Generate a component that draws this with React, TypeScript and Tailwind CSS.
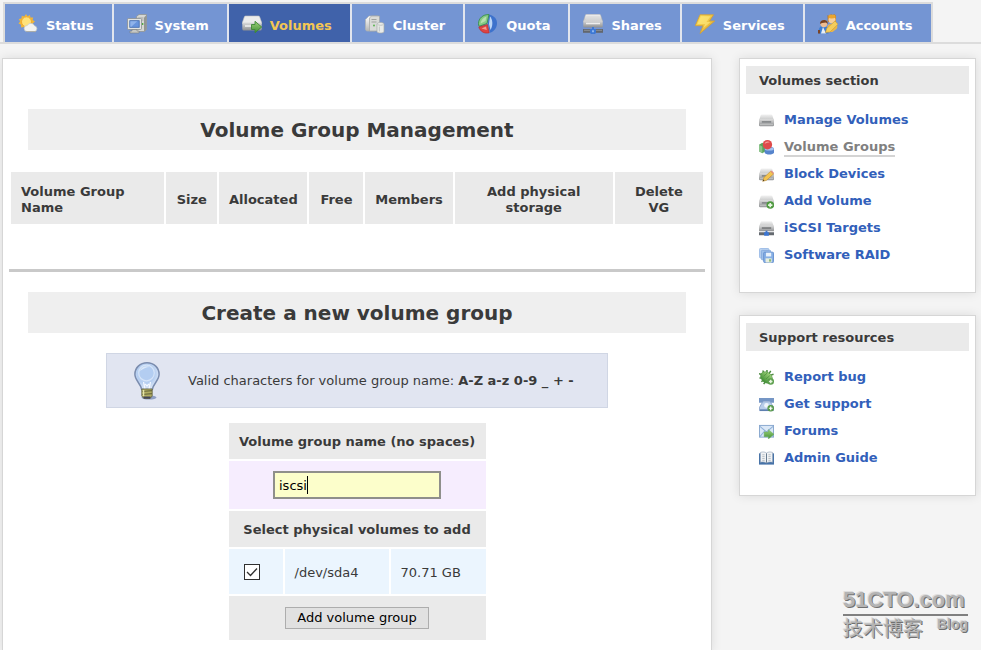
import React from "react";

type IconProps = { className?: string };

function Defs() {
  return (
    <svg width="0" height="0" className="absolute" aria-hidden="true">
      <defs>
        <linearGradient id="silver" x1="0" y1="0" x2="0" y2="1">
          <stop offset="0" stopColor="#ffffff" />
          <stop offset="1" stopColor="#b4b6b4" />
        </linearGradient>
        <linearGradient id="steel" x1="0" y1="0" x2="0" y2="1">
          <stop offset="0" stopColor="#dcdcdc" />
          <stop offset="1" stopColor="#8e9092" />
        </linearGradient>
        <linearGradient id="lid" x1="0" y1="0" x2="0" y2="1">
          <stop offset="0" stopColor="#f2f2f2" />
          <stop offset="1" stopColor="#c2c3c3" />
        </linearGradient>
        <linearGradient id="leaf" x1="0" y1="0" x2="0" y2="1">
          <stop offset="0" stopColor="#9fd27a" />
          <stop offset="1" stopColor="#3f8f35" />
        </linearGradient>
        <linearGradient id="sky" x1="0" y1="0" x2="0" y2="1">
          <stop offset="0" stopColor="#cfe2f7" />
          <stop offset="1" stopColor="#5f8fce" />
        </linearGradient>
        <linearGradient id="gold" x1="0" y1="0" x2="1" y2="1">
          <stop offset="0" stopColor="#ffe45e" />
          <stop offset="1" stopColor="#dda62a" />
        </linearGradient>
        <radialGradient id="glass" cx="0.45" cy="0.4" r="0.6">
          <stop offset="0" stopColor="#d9e8fa" />
          <stop offset="0.6" stopColor="#b4cdf0" />
          <stop offset="1" stopColor="#dfe9f7" />
        </radialGradient>
      </defs>
    </svg>
  );
}

function WeatherIcon({ className }: IconProps) {
  return (
    <svg viewBox="0 0 20 20" className={className} aria-hidden="true">
      <path d="M8 0l1.500 2.200L12 1l.4 2.600 2.800-.2-.6 2.600 2.400 1.500-2 1.800.6 2.700-2.700.2-1 2.600-2.500-1.100L7 15.500l-1.300-2.400-2.700.4.100-2.700L.5 9.500l1.600-2.100L.8 5l2.600-.5L3.800 1.800l2.500.8z" fill="#f0b63a" />
      <circle cx="8.500" cy="7.800" r="5" fill="#ffe27a" stroke="#f2a92c" />
      <path d="M9 17.500a3 3 0 0 1 .3-6 4 4 0 0 1 7.200.2 3 3 0 0 1 .3 5.800z" fill="#f3f3f0" stroke="#c4c8c6" strokeWidth=".7" />
      <path d="M8 17.600h10" stroke="#a9aaa6" />
    </svg>
  );
}

function SystemIcon({ className }: IconProps) {
  return (
    <svg viewBox="0 0 20 20" className={className} aria-hidden="true">
      <path d="M9.500 2.500L12 .5h7.500v15l-2 2h-8z" fill="#d6d8d4" stroke="#8c8f8c" strokeWidth=".7" />
      <path d="M17 3.500L19.500 1v14.500l-2.500 2z" fill="#929693" />
      <path d="M10.500 4h6M10.500 6h6" stroke="#999" strokeWidth=".8" />
      <circle cx="15.500" cy="10" r="1" fill="#44a832" />
      <rect x=".5" y="4.500" width="14" height="11" rx="1" fill="#e2e4e1" stroke="#8a8f90" strokeWidth=".8" />
      <rect x="2.800" y="6.700" width="9.400" height="6.600" fill="#6794dc" stroke="#3e68ad" strokeWidth=".8" />
      <path d="M3.300 7.200h7L4.300 12.700h-1z" fill="#8fb3ea" />
      <path d="M5 15.500h5v1.500h2v2H3v-2h2z" fill="#c6c8c5" stroke="#7d807d" strokeWidth=".6" />
    </svg>
  );
}

function DriveGoIcon({ className }: IconProps) {
  return (
    <svg viewBox="0 0 20 20" className={className} aria-hidden="true">
      <path d="M3.500 2h13c.6 0 1 .3 1.200 1L20 9.500H0L2.300 3c.2-.7.600-1 1.200-1z" fill="#ececec" stroke="#bfc1c0" strokeWidth=".6" />
      <rect x=".3" y="8.500" width="19.400" height="8" rx="1.500" fill="url(#steel)" />
      <path d="M3 12h8" stroke="#f2f2f2" strokeWidth="1.500" />
      <path d="M9.500 10.500h3.500V7.300l6.700 5.700-6.700 5.700v-3.200H9.500z" fill="url(#leaf)" stroke="#3d8836" strokeWidth=".9" />
    </svg>
  );
}

function ClusterIcon({ className }: IconProps) {
  return (
    <svg viewBox="0 0 20 20" className={className} aria-hidden="true">
      <path d="M.5 5.500L4 2h9v12.500L9.500 17h-8L.5 15.500z" fill="url(#silver)" stroke="#b0b3b2" strokeWidth=".7" />
      <path d="M4.500 4l2-2h8v13l-2 2h-8z" fill="#d9dbd8" stroke="#a2a5a3" strokeWidth=".7" />
      <path d="M6.500 5.500h5M6.500 8h5" stroke="#989b99" strokeWidth=".9" />
      <circle cx="9" cy="11.500" r=".9" fill="#4cb040" />
      <path d="M12 10c0-2 7-2 7 0v7.500c0 2-7 2-7 0z" fill="#e9ebe9" stroke="#a5a9a7" strokeWidth=".7" />
      <path d="M12.500 10.300c1 1.300 5 1.300 6 0M14.300 12.500v5" stroke="#bfc2c0" fill="none" />
    </svg>
  );
}

function QuotaIcon({ className }: IconProps) {
  return (
    <svg viewBox="0 0 20 20" className={className} aria-hidden="true">
      <path d="M11 .5c5 1.200 8.500 4.500 8 9.500-.4 4.500-3 7.300-7 8.800L10 9z" fill="#3d72cc" />
      <path d="M12 2.500c2.500 2.500 3.500 8 .5 13.500L11 10z" fill="#bcd6f6" />
      <path d="M11 .6C5 .2.500 4.500.500 9.500c0 1 .2 2 .6 2.800L9 9.500z" fill="#86c987" stroke="#2f8c3f" strokeWidth=".8" />
      <path d="M2.500 9.500c.5-3.500 3-6 6-7L7.500 7z" fill="#b6e0ae" />
      <path d="M.8 13L9.500 10.500l1.700 8.300C6.500 20 2 17.500.8 13z" fill="#dd4442" stroke="#bb2527" strokeWidth=".6" />
      <path d="M3.500 14.500l4.500-2 .8 3.500z" fill="#f59a92" />
    </svg>
  );
}

function DriveNetworkIcon({ className }: IconProps) {
  return (
    <svg viewBox="0 0 20 20" className={className} aria-hidden="true">
      <path d="M3.500 .3h13c.6 0 1 .3 1.200 1l2 6.200H.3l2-6.200c.2-.7.600-1 1.200-1z" fill="url(#lid)" stroke="#a9abab" strokeWidth=".5" />
      <path d="M3.500 3h13M3 5h14" stroke="#d9dada" />
      <rect x=".3" y="6.500" width="19.400" height="7" rx="1.300" fill="url(#steel)" />
      <path d="M3 9.500h14" stroke="#eeeeee" strokeWidth="1.500" />
      <path d="M0 15h20v3.800H0z" fill="#62676e" />
      <path d="M1 16.300h18" stroke="#8d9299" />
      <path d="M9 13h2v2h2v3.800L12 20H8l-1-1.200V15h2z" fill="#3d78d4" />
      <path d="M9 16.200h2v2H9z" fill="#8bb5f0" />
    </svg>
  );
}

function LightningIcon({ className }: IconProps) {
  return (
    <svg viewBox="0 0 20 20" className={className} aria-hidden="true">
      <path d="M5 .8h13.500L14.500 7H19.700L5 19.500l3-7.800H.3z" fill="url(#gold)" stroke="#d7a02e" strokeWidth=".8" />
      <path d="M6 2.300h9.500L11.500 8h4L8.500 14l1.500-4H2.500z" fill="#ffeb83" opacity=".6" />
    </svg>
  );
}

function AccountsIcon({ className }: IconProps) {
  return (
    <svg viewBox="0 0 20 20" className={className} aria-hidden="true">
      <path d="M9.500 18c-1-5 0-8 3.500-8h3.500c3 0 3.500 3 2 5l-4 3z" fill="#eab74c" />
      <path d="M9.500 1l1.500 1 2-1.700L14.500 1l2-.8L18 2v6H9.800z" fill="#b97320" />
      <circle cx="14" cy="5.800" r="3.600" fill="#f6cf9b" />
      <path d="M10 3.500c2 1.300 5 1.300 8 0L17 .8h-6z" fill="#e9a52e" />
      <path d="M.5 19.500c0-6 1.500-7.500 5-7.500s5 2 5 7.500z" fill="#3f7fd0" />
      <path d="M5 13l3 6.500H3z" fill="#e9eef5" />
      <circle cx="5.800" cy="9.800" r="3.400" fill="#edbd91" />
      <path d="M2 10C1.500 4.500 10.500 4.500 9.700 10L8 8.500 4 9z" fill="#79421f" />
      <path d="M7.500 18.500l1.200-4 8.300-7.500 3 3.300-8 7.700z" fill="#f4cd5c" stroke="#cf982e" strokeWidth=".6" />
      <path d="M0 16h2v3.500H0z" fill="#7b4426" />
    </svg>
  );
}

function SmallDrive({ children, className }: { children?: React.ReactNode; className?: string }) {
  return (
    <svg viewBox="0 0 16 16" className={className} aria-hidden="true">
      <path d="M3 1.500h10c.6 0 1 .3 1.200 1L16 8H0l1.800-5.500c.2-.7.600-1 1.200-1z" fill="url(#lid)" />
      <rect x="0" y="6.500" width="16" height="7.500" rx="1.300" fill="url(#steel)" />
      <path d="M3 9.500h10" stroke="#7b7e80" strokeWidth="1.500" />
      <path d="M1 12.500h14" stroke="#c5c6c6" />
      {children}
    </svg>
  );
}

function ManageIcon({ className }: IconProps) {
  return <SmallDrive className={className} />;
}

function BlockIcon({ className }: IconProps) {
  return (
    <SmallDrive className={className}>
      <path d="M4 15.300l1.200-4 7.300-6.800 3 2.900-7.500 6.800z" fill="#f3c452" stroke="#bd8a2c" strokeWidth=".6" />
      <path d="M12.300 4.700l1.200-1L16 6.300l-.8 1.200z" fill="#e38d82" />
      <path d="M4 15.300l.6-1.900 1.300 1.300z" fill="#4a3a20" />
    </SmallDrive>
  );
}

function AddDriveIcon({ className }: IconProps) {
  return (
    <SmallDrive className={className}>
      <circle cx="12" cy="11.800" r="4" fill="#4e9a3f" />
      <path d="M12 9.500v4.600M9.700 11.800h4.600" stroke="#e9f6e4" strokeWidth="1.800" />
    </SmallDrive>
  );
}

function TargetIcon({ className }: IconProps) {
  return (
    <svg viewBox="0 0 16 16" className={className} aria-hidden="true">
      <path d="M3 .3h10c.6 0 1 .3 1.200 1L16 6H0l1.800-4.700c.2-.7.600-1 1.200-1z" fill="url(#lid)" />
      <rect x="0" y="4.800" width="16" height="6.200" rx="1" fill="url(#steel)" />
      <path d="M3 7.500h10" stroke="#6d7072" strokeWidth="1.500" />
      <path d="M0 12h16v3.200H0z" fill="#656a70" />
      <path d="M7 10.500h2V12h1.500v3.700h-5V12H7z" fill="#3c76d3" />
    </svg>
  );
}

function GroupsIcon({ className }: IconProps) {
  return (
    <svg viewBox="0 0 16 16" className={className} aria-hidden="true">
      <path d="M0 5l3.500-2L7 5v7l-3.500 2L0 12z" fill="#5aa55c" />
      <path d="M0 5l3.500 2v7L0 12z" fill="#8bc48a" />
      <path d="M6 9c1-2.500 9-2.500 10 0v4.500c-1 2.500-9 2.500-10 0z" fill="#5684cc" />
      <ellipse cx="11" cy="9.500" rx="4.800" ry="1.800" fill="#a6c4ee" />
      <circle cx="9" cy="5" r="5" fill="#df4a4b" />
      <path d="M6 4c.6-2.500 4-3 5.500-1.500C10 2.600 8 3.500 6 4z" fill="#f4a09b" />
    </svg>
  );
}

function RaidIcon({ className }: IconProps) {
  return (
    <svg viewBox="0 0 16 16" className={className} aria-hidden="true">
      <rect x=".5" y=".5" width="10" height="10" rx="1" fill="#bcd3f0" stroke="#9dbce6" />
      <rect x="2.500" y="2.500" width="10" height="10" rx="1" fill="#9fc0ea" stroke="#86abdd" />
      <rect x="5" y="4.500" width="10.500" height="11" rx="1" fill="#86afe5" stroke="#6590cf" />
      <rect x="7.500" y="5" width="5.500" height="4" fill="#eaf2fb" />
      <rect x="7" y="11" width="6.500" height="4.500" fill="#e8eedf" />
      <rect x="11" y="12" width="1.500" height="2.500" fill="#6da84f" />
    </svg>
  );
}

function BugIcon({ className }: IconProps) {
  return (
    <svg viewBox="0 0 16 16" className={className} aria-hidden="true">
      <path d="M0 4l4 1M.5 8.500h4M4 .5l1.500 3.500M8.500 0v3M2.500 12.500l3-2M12.500 1l-2 3.500M15.500 4.500l-3 1M5 15l2-3" stroke="#4c8a40" strokeWidth="1.600" />
      <ellipse cx="8" cy="8" rx="7" ry="5.400" transform="rotate(42 8 8)" fill="url(#leaf)" stroke="#4d9142" strokeWidth=".6" />
      <path d="M5 6.500l4-3.500M7.500 9.500l4-3.500" stroke="#4a8f3e" strokeWidth=".8" />
      <circle cx="12.500" cy="12.200" r="3.500" fill="#5a9d4b" />
      <path d="M12.500 10.300v3.800M10.600 12.200h3.800" stroke="#e6f5df" strokeWidth="1.500" />
    </svg>
  );
}

function SupportIcon({ className }: IconProps) {
  return (
    <svg viewBox="0 0 16 16" className={className} aria-hidden="true">
      <path d="M0 1h16v5h-4.500V4.500h-7V6H0z" fill="#7596c5" />
      <path d="M4 5h8l3.500 6v3.500H.5V11z" fill="#b8cde9" stroke="#7d9ac5" strokeWidth=".8" />
      <circle cx="8" cy="9" r="2.500" fill="#f0f5fc" />
      <path d="M1 14h14" stroke="#5274a8" strokeWidth="1.500" />
      <circle cx="12.500" cy="12" r="3.500" fill="#579849" />
      <path d="M12.500 10v4M10.500 12h4" stroke="#fff" strokeWidth="1.300" />
    </svg>
  );
}

function ForumIcon({ className }: IconProps) {
  return (
    <svg viewBox="0 0 16 16" className={className} aria-hidden="true">
      <rect x=".5" y="1.500" width="15" height="12.500" fill="#dbe8f7" stroke="#86a5cd" />
      <path d="M1 2.500l7 6 7-6M1 13.500l5-6M15 13.500l-5-6" fill="none" stroke="#8fb0d8" strokeWidth="1.100" />
      <path d="M5.500 8.500H10V6l6 5-6 5v-2.500H5.500z" fill="url(#leaf)" stroke="#6aac5b" strokeWidth=".5" />
    </svg>
  );
}

function BookIcon({ className }: IconProps) {
  return (
    <svg viewBox="0 0 16 16" className={className} aria-hidden="true">
      <path d="M0 2.500h16v12H0z" fill="#4672a8" />
      <path d="M1.500 1.500c2.500-.8 5-.6 6.500.7 1.500-1.300 4-1.500 6.500-.7v10.500c-2.500-.6-5-.4-6.500.8-1.500-1.200-4-1.400-6.500-.8z" fill="#f0f2f4" stroke="#8a9cb3" strokeWidth=".6" />
      <path d="M8 2.500v10" stroke="#5d7186" />
      <path d="M3.500 4h2.500M3.500 6h2.500M3.500 8h2.500M3.500 10h2.500M10 4h2.500M10 6h2.500M10 8h2.500M10 10h2.500" stroke="#a8b0b8" strokeWidth=".8" />
    </svg>
  );
}

function BulbIcon({ className }: IconProps) {
  return (
    <svg viewBox="0 0 26 38" className={className} aria-hidden="true">
      <ellipse cx="15" cy="35.500" rx="7.500" ry="2" fill="#8f9fc4" />
      <path d="M13 .8C6 .8.9 5.800.9 12.300c0 6.200 5.600 8.700 6.800 15.200h10.600c1.200-6.500 6.800-9 6.800-15.200C25.100 5.800 20 .8 13 .8z" fill="url(#glass)" stroke="#7a8cae" strokeWidth="1.500" />
      <circle cx="12.500" cy="11" r="7.800" fill="#b3cdf1" stroke="#d5e4f8" strokeWidth="1.200" />
      <path d="M6 9c1-4 6-6 10-4-4 0-7 2-10 4z" fill="#dbe8f9" />
      <path d="M9.500 20l1.500 7M16.500 20L15 27M11 22l2 2 2-2" fill="none" stroke="#f5f9ff" strokeWidth="1.200" />
      <path d="M7.800 27h10.400v7l-2.200 2.500h-6L7.800 34z" fill="#b1ad62" stroke="#5f5f3d" strokeWidth=".8" />
      <path d="M8 29.500l10-.8M8 32.500l10-.8" stroke="#6c6b3e" strokeWidth="1.200" />
      <path d="M9.500 28v6" stroke="#e6e5a8" strokeWidth="1.500" />
      <path d="M9.500 35.500h7" stroke="#44465a" strokeWidth="2" />
    </svg>
  );
}

const tabs = [
  { label: "Status", Icon: WeatherIcon },
  { label: "System", Icon: SystemIcon },
  { label: "Volumes", Icon: DriveGoIcon, active: true },
  { label: "Cluster", Icon: ClusterIcon },
  { label: "Quota", Icon: QuotaIcon },
  { label: "Shares", Icon: DriveNetworkIcon },
  { label: "Services", Icon: LightningIcon },
  { label: "Accounts", Icon: AccountsIcon },
];

const volumeLinks = [
  { label: "Manage Volumes", Icon: ManageIcon },
  { label: "Volume Groups", Icon: GroupsIcon, current: true },
  { label: "Block Devices", Icon: BlockIcon },
  { label: "Add Volume", Icon: AddDriveIcon },
  { label: "iSCSI Targets", Icon: TargetIcon },
  { label: "Software RAID", Icon: RaidIcon },
];

const supportLinks = [
  { label: "Report bug", Icon: BugIcon },
  { label: "Get support", Icon: SupportIcon },
  { label: "Forums", Icon: ForumIcon },
  { label: "Admin Guide", Icon: BookIcon },
];

type LinkItem = { label: string; Icon: (p: IconProps) => React.ReactElement; current?: boolean };

function SidePanel({ title, links }: { title: string; links: LinkItem[] }) {
  return (
    <section className="border border-[#d6d6d6] bg-white px-1.5 pt-[7px] pb-[23px] shadow-[0_0_10px_rgba(0,0,0,0.1)]">
      <h3 className="bg-[#eaeaea] px-[13px] pt-0.5 text-[13px] leading-[26px] font-bold">{title}</h3>
      <ul className="mt-[13px] px-[13px]">
        {links.map(({ label, Icon, current }) => (
          <li key={label} className="flex h-[27px] items-center gap-2.5">
            <Icon className="size-[15px] shrink-0" />
            <a
              href="#"
              className={
                current
                  ? "border-b-2 border-[#d4d4d4] text-[13px] leading-4 font-bold text-[#808080]"
                  : "border-b-2 border-transparent text-[13px] leading-4 font-bold text-[#3260ba]"
              }
            >
              {label}
            </a>
          </li>
        ))}
      </ul>
    </section>
  );
}

function Heading({ children }: { children: React.ReactNode }) {
  return (
    <h2 className="mx-[19px] bg-[#efefef] pt-0.5 text-center text-xl leading-[39px] font-bold">{children}</h2>
  );
}

export default function App() {
  return (
    <div className="relative flex min-h-screen flex-col bg-[#f4f4f4] pt-0.5 font-['Verdana','DejaVu_Sans',sans-serif] text-[13px] text-[#3a3a3a]">
      <Defs />
      <nav className="flex border-b-2 border-[#dcdcdc] pl-[3px]">
        <ul className="flex gap-0.5 border-2 border-b-0 border-[#dcdcdc] bg-[#e1e5ee]">
          {tabs.map(({ label, Icon, active }) => (
            <li key={label} className="flex">
              <a
                href="#"
                className={
                  active
                    ? "flex h-[38px] items-center gap-2 bg-[#4062aa] pt-0.5 pr-[18px] pl-[13px] font-bold text-[#f3c653]"
                    : "flex h-[38px] items-center gap-2 bg-[#7495d3] pt-0.5 pr-[18px] pl-[13px] font-bold text-white"
                }
              >
                <Icon className="size-5 shrink-0" />
                <span className="pt-1">{label}</span>
              </a>
            </li>
          ))}
        </ul>
      </nav>

      <div className="mt-3.5 flex grow gap-[27px] pr-[5px] pl-0.5">
        <main className="min-w-0 grow border border-b-0 border-[#d6d6d6] bg-white px-1.5 pt-[50px] pb-2.5 shadow-[0_0_10px_rgba(0,0,0,0.1)]">
          <Heading>Volume Group Management</Heading>

          <table className="mt-5 w-full table-fixed border-separate border-spacing-0.5 leading-4">
            <thead>
              <tr className="h-[52px] bg-[#eaeaea]">
                <th className="w-[153px] px-2.5 pt-1 text-left">Volume Group Name</th>
                <th className="w-[51px] pt-1">Size</th>
                <th className="w-[88px] pt-1">Allocated</th>
                <th className="w-[54px] pt-1">Free</th>
                <th className="w-[87px] pt-1">Members</th>
                <th className="w-[158px] px-2.5 pt-1">Add physical storage</th>
                <th className="w-[88px] px-2.5 pt-1">Delete VG</th>
              </tr>
            </thead>
          </table>

          <hr className="mt-[43px] mb-5 border-t-[3px] border-[#c9c9c9]" />

          <Heading>Create a new volume group</Heading>

          <div className="mx-auto mt-5 flex h-[55px] w-[502px] max-w-full items-center gap-7 border border-[#d0d6e4] bg-[#e1e5f1] pl-[27px]">
            <BulbIcon className="h-[38px] w-[26px] shrink-0" />
            <p>
              Valid characters for volume group name: <b>A-Z a-z 0-9 _ + -</b>
            </p>
          </div>

          <form className="mt-[13px]" onSubmit={(e) => e.preventDefault()}>
            <table className="mx-auto w-[261px] table-fixed border-separate border-spacing-0.5 leading-4">
              <colgroup>
                <col className="w-[54px]" />
                <col className="w-[104px]" />
                <col />
              </colgroup>
              <tbody>
                <tr className="h-9 bg-[#eaeaea]">
                  <th colSpan={3} className="pt-0.5 whitespace-nowrap">
                    <label htmlFor="vg-name">Volume group name (no spaces)</label>
                  </th>
                </tr>
                <tr className="h-12 bg-[#f6edfe]">
                  <td colSpan={3}>
                    <div className="relative mx-auto w-[168px]">
                      <input
                        id="vg-name"
                        type="text"
                        defaultValue="iscsi"
                        className="block h-7 w-full border-2 border-[#8f8f8b] bg-[#fcfecb] px-1 text-[13px] text-black outline-none"
                      />
                      <span className="absolute top-[5px] left-[34px] h-[18px] w-px bg-black" />
                    </div>
                  </td>
                </tr>
                <tr className="h-9 bg-[#eaeaea]">
                  <th colSpan={3} className="pt-0.5 whitespace-nowrap">Select physical volumes to add</th>
                </tr>
                <tr className="h-[45px] bg-[#ebf5fe]">
                  <td className="pl-[15px]">
                    <span className="grid size-4">
                      <input
                        id="pv-sda4"
                        type="checkbox"
                        defaultChecked
                        className="peer col-start-1 row-start-1 size-4 appearance-none border border-[#303030] bg-white"
                      />
                      <svg
                        viewBox="0 0 16 16"
                        className="pointer-events-none invisible col-start-1 row-start-1 size-4 peer-checked:visible"
                        aria-hidden="true"
                      >
                        <path d="M3 8l3.500 3.500L13 4.500" fill="none" stroke="#303030" strokeWidth="1.300" />
                      </svg>
                    </span>
                  </td>
                  <td className="px-2.5 pt-0.5">
                    <label htmlFor="pv-sda4">/dev/sda4</label>
                  </td>
                  <td className="px-2.5 pt-0.5 whitespace-nowrap">70.71 GB</td>
                </tr>
                <tr className="h-11 bg-[#eaeaea]">
                  <td colSpan={3} className="text-center">
                    <button
                      type="submit"
                      className="h-[22px] w-36 border border-[#adadad] bg-[#e1e1e1] text-[13px] whitespace-nowrap text-black"
                    >
                      Add volume group
                    </button>
                  </td>
                </tr>
              </tbody>
            </table>
          </form>
        </main>

        <aside className="flex w-[237px] shrink-0 flex-col gap-[22px]">
          <SidePanel title="Volumes section" links={volumeLinks} />
          <SidePanel title="Support resources" links={supportLinks} />
        </aside>
      </div>

      <div className="absolute right-[13px] bottom-3 w-[125px] text-[#b4b4b4] [text-shadow:1px_1px_0_#707070,-1px_-1px_0_#dedede]">
        <div className="border-b-2 border-[#808080] font-['Impact','Liberation_Sans',sans-serif] text-[22px] leading-7 font-bold">
          51CTO.com
        </div>
        <div className="flex items-start justify-between">
          <span className="font-['Noto_Sans_CJK_SC',sans-serif] text-xl leading-6">技术博客</span>
          <span className="font-['Liberation_Sans',sans-serif] text-sm leading-4 font-bold">Blog</span>
        </div>
      </div>
    </div>
  );
}
